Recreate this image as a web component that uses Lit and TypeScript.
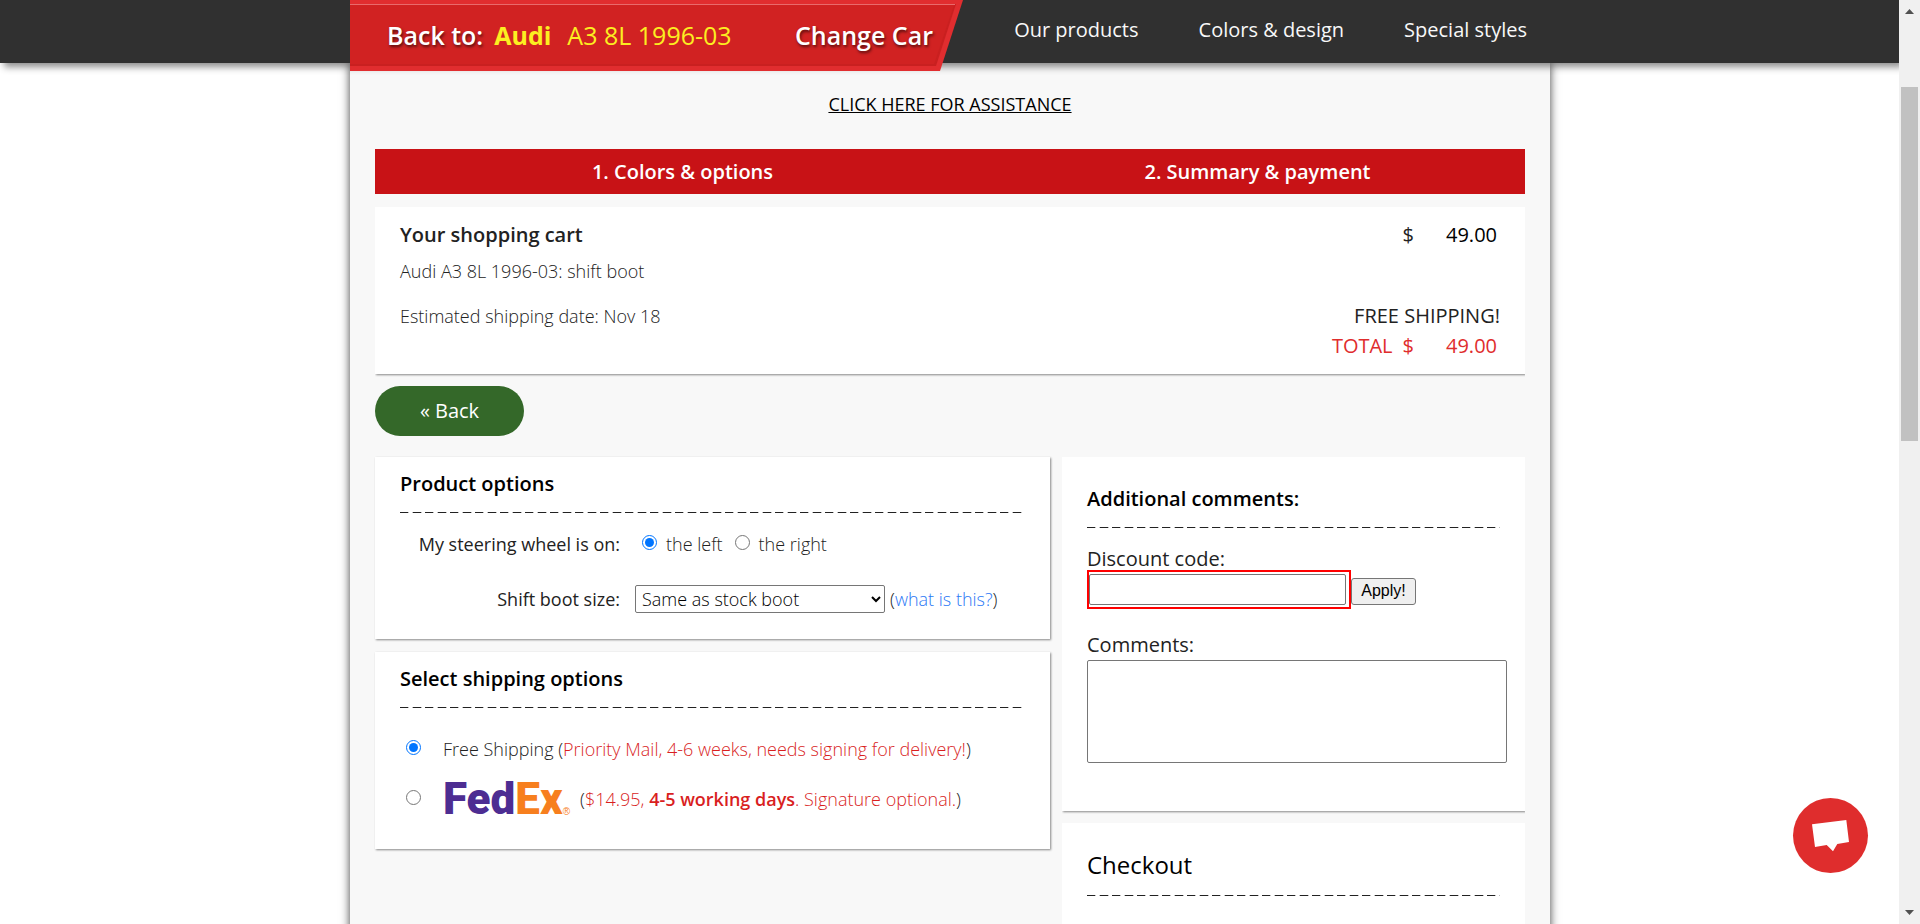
import { LitElement, html, css } from "lit";
import { customElement, state } from "lit/decorators.js";

@customElement("app-root")
export class AppRoot extends LitElement {
  @state() private side = "left";
  @state() private shipping = "free";

  static styles = css`
    :host {
      display: flex;
      height: 100vh;
      overflow: hidden;
      background: #fff;
      color: #222;
      font: 300 18px/26px "Open Sans", sans-serif;
    }
    * {
      box-sizing: border-box;
    }
    h2, p {
      margin: 0;
    }
    .page {
      flex: 1;
      min-width: 0;
      position: relative;
      overflow: hidden;
      display: flex;
      flex-direction: column;
      align-items: center;
    }
    .top {
      width: 100%;
      height: 63px;
      flex: none;
      position: relative;
      z-index: 2;
      display: flex;
      justify-content: center;
      background: #303030;
      box-shadow: 4px 4px 7px rgba(0, 0, 0, 0.45);
    }
    .top-inner {
      width: 100%;
      max-width: 1200px;
      margin-left: 1px;
      display: flex;
      align-items: flex-start;
      justify-content: space-between;
    }
    .tab {
      position: relative;
      width: 613px;
      height: 71px;
      display: flex;
      align-items: center;
      padding: 0 30px 2px 37px;
      font-size: 25px;
      line-height: 36px;
      white-space: nowrap;
    }
    .tab-shape {
      position: absolute;
      inset: 0;
      width: 100%;
      height: 100%;
    }
    .tab a {
      position: relative;
      color: #fff;
      font-weight: 600;
      text-decoration: none;
      text-shadow: 1px 2px 3px rgba(0, 0, 0, 0.6);
    }
    .tab .car {
      display: flex;
      gap: 16px;
      margin: 0 auto 0 11px;
      color: #fcee21;
      font-weight: 400;
      text-shadow: none;
    }
    .tab b {
      font-weight: 700;
    }
    nav {
      display: flex;
      gap: 60px;
      padding: 15px 23px 0 0;
      font-size: 20px;
      line-height: 30px;
      white-space: nowrap;
    }
    nav a {
      color: #f8f8f8;
      font-weight: 400;
      text-decoration: none;
    }
    main {
      width: 100%;
      max-width: 1200px;
      margin-left: 1px;
      flex: 1 0 auto;
      display: flex;
      flex-direction: column;
      padding: 28px 25px 0;
      background: #f8f8f8;
      box-shadow: 0 0 9px rgba(0, 0, 0, 0.75);
    }
    .assist {
      align-self: center;
      color: #000;
      font-weight: 400;
    }
    .steps {
      display: grid;
      grid-template-columns: 1fr 1fr;
      margin: 32px 0 13px;
      padding: 0;
      list-style: none;
      background: #c81216;
      color: #fff;
      font-size: 20px;
      font-weight: 600;
      line-height: 45px;
      text-align: center;
    }
    .steps li {
      padding-left: 40px;
    }
    .card {
      background: #fff;
      box-shadow: 1px 1px 2px #888;
      padding: 12px 25px 25px;
    }
    .flush {
      clip-path: inset(0 0 -4px 0);
    }
    .cart {
      display: grid;
      grid-template-columns: 1fr auto;
      padding: 13px 25px;
      line-height: 30px;
    }
    .price {
      display: flex;
      justify-content: flex-end;
      gap: 10px;
      font-size: 20px;
      font-weight: 400;
    }
    .cart .item {
      grid-column: 1 / 3;
      margin: 6px 0 15px;
    }
    .amount {
      width: 76px;
      padding-right: 3px;
      text-align: right;
    }
    .dark {
      color: #000;
    }
    .total {
      grid-column: 2;
      color: #df2d2d;
    }
    .back {
      align-self: flex-start;
      width: 149px;
      height: 50px;
      margin: 12px 0 21px;
      border: 0;
      border-radius: 25px;
      background: #346829;
      color: #fff;
      font: 400 20px/30px "Open Sans", sans-serif;
    }
    .columns {
      display: grid;
      grid-template-columns: minmax(0, 675fr) minmax(0, 463fr);
      gap: 12px;
      align-items: start;
    }
    .stack {
      display: flex;
      flex-direction: column;
      gap: 13px;
    }
    .side {
      gap: 12px;
    }
    .card h2 {
      font-size: 20px;
      font-weight: 600;
      line-height: 30px;
    }
    .title {
      color: #000;
      padding-bottom: 13px;
    }
    .rule {
      height: 1px;
      background: linear-gradient(90deg, #222 0 8px, #bbb 8px 9px, transparent 9px 12px, #bbb 12px 13px, #222 13px 21px, #bbb 21px 22px, transparent 22px) 0 0 / 25px 1px repeat-x;
    }
    .options {
      display: grid;
      grid-template-columns: 220px 1fr;
      column-gap: 15px;
      row-gap: 27px;
      padding: 17px 0 1px;
      align-items: center;
      line-height: 28px;
    }
    .name {
      text-align: right;
      font-weight: 400;
    }
    .line {
      display: flex;
      align-items: center;
      white-space: nowrap;
    }
    input[type="radio"] {
      width: 15px;
      height: 15px;
      flex: none;
      margin: 0 9px 3px 7px;
    }
    .gap-left {
      padding-left: 5px;
    }
    select {
      width: 250px;
      height: 28px;
      margin-right: 5px;
      padding: 0 2px;
      border: 1px solid #767676;
      border-radius: 2px;
      background-color: #fff;
      color: #000;
      font: 300 18px/26px "Open Sans", sans-serif;
    }
    .line a {
      color: #2b78f5;
      text-decoration: none;
    }
    .red {
      color: #d91f1f;
    }
    .red b {
      font-weight: 600;
    }
    .ship {
      display: flex;
      flex-direction: column;
      gap: 14px;
      padding: 23px 0 7px;
    }
    .ship .line {
      height: 36px;
    }
    .ship input[type="radio"] {
      margin: 0 22px 3px 6px;
    }
    .fedex {
      display: flex;
      align-items: flex-end;
      width: 137px;
      color: #4d2d92;
      font: 900 44px/38px "Roboto", sans-serif;
    }
    .fedex span {
      color: #f77f1e;
    }
    .fedex small {
      font: 400 10px/12px "Liberation Sans", sans-serif;
      color: #f77f1e;
    }
    .notes {
      padding: 27px 25px 48px;
    }
    .field {
      display: block;
      font-size: 20px;
      font-weight: 400;
      line-height: 30px;
    }
    .first {
      height: 42px;
      padding-top: 16px;
    }
    .code {
      display: flex;
      align-items: flex-end;
      margin-bottom: 21px;
    }
    .mark {
      width: 264px;
      height: 39px;
      padding: 2px 3px 2px 0;
      border: 2px solid #f00;
    }
    .mark input, textarea {
      display: block;
      width: 100%;
      height: 31px;
      border: 1px solid #767676;
      border-radius: 2px;
      font: 400 16px/20px "Liberation Sans", sans-serif;
    }
    .apply {
      height: 27px;
      width: 65px;
      margin-bottom: 4px;
      padding: 0 0 2px;
      border: 1px solid #767676;
      border-radius: 3px;
      background: #efefef;
      color: #000;
      font: 400 16px/20px "Liberation Sans", sans-serif;
    }
    .comments {
      padding-right: 18px;
      margin-right: -25px;
    }
    textarea {
      height: 103px;
      resize: none;
    }
    .checkout {
      padding: 25px 25px 60px;
    }
    .checkout h2 {
      font-size: 24px;
      line-height: 34px;
      font-weight: 400;
      padding-bottom: 13px;
    }
    .chat {
      position: absolute;
      right: 31px;
      bottom: 51px;
      z-index: 3;
      width: 75px;
      height: 75px;
      padding: 0;
      border: 0;
      border-radius: 50%;
      background: #df2d2d;
    }
    .chat svg {
      display: block;
    }
    .scroll {
      flex: none;
      width: 21px;
      display: flex;
      flex-direction: column;
      align-items: center;
      padding: 9px 0;
      background: #f0f0f0;
    }
    .track {
      flex: 1;
      width: 17px;
      padding-top: 73px;
    }
    .thumb {
      height: 43%;
      background: #c1c1c1;
    }
    .scroll svg {
      display: block;
      flex: none;
    }
  `;

  private pickSide(e: Event) {
    this.side = (e.target as HTMLInputElement).value;
  }

  private pickShipping(e: Event) {
    this.shipping = (e.target as HTMLInputElement).value;
  }

  render() {
    return html`
      <div class="page">
        <header class="top">
          <div class="top-inner">
            <div class="tab">
              <svg class="tab-shape" viewBox="0 0 613 71" preserveAspectRatio="none" aria-hidden="true">
                <path d="M0 0H613L590 71H0Z" fill="#e12d2f" />
                <path d="M0 4H606L586 66H0Z" fill="#c92020" />
                <path d="M0 5H604L584 64H0Z" fill="#d12222" />
                <path d="M0 4.500H605" stroke="#e96a6b" stroke-width="1" />
              </svg>
              <a href="#">Back to:</a>
              <a class="car" href="#"><b>Audi</b><span>A3 8L 1996-03</span></a>
              <a href="#">Change Car</a>
            </div>
            <nav>
              <a href="#">Our products</a>
              <a href="#">Colors &amp; design</a>
              <a href="#">Special styles</a>
            </nav>
          </div>
        </header>
        <main>
          <a class="assist" href="#">CLICK HERE FOR ASSISTANCE</a>
          <ol class="steps">
            <li>1. Colors &amp; options</li>
            <li>2. Summary &amp; payment</li>
          </ol>
          <section class="card flush cart">
            <h2>Your shopping cart</h2>
            <p class="price"><span>$</span><span class="amount dark">49.00</span></p>
            <p class="item">Audi A3 8L 1996-03: shift boot</p>
            <p>Estimated shipping date: Nov 18</p>
            <p class="price">FREE SHIPPING!</p>
            <p class="price total"><span>TOTAL</span><span>$</span><span class="amount">49.00</span></p>
          </section>
          <button class="back" type="button">« Back</button>
          <div class="columns">
            <div class="stack">
              <section class="card">
                <h2 class="title">Product options</h2>
                <div class="rule"></div>
                <div class="options">
                  <span class="name" id="wheel">My steering wheel is on:</span>
                  <div class="line" role="radiogroup" aria-labelledby="wheel">
                    <input type="radio" id="left" name="side" value="left" .checked=${this.side === "left"} @change=${this.pickSide} />
                    <label for="left">the left</label>
                    <span class="gap-left"></span>
                    <input type="radio" id="right" name="side" value="right" .checked=${this.side === "right"} @change=${this.pickSide} />
                    <label for="right">the right</label>
                  </div>
                  <label class="name" for="size">Shift boot size:</label>
                  <div class="line">
                    <select id="size"><option>Same as stock boot</option></select>
                    <span>(<a href="#">what is this?</a>)</span>
                  </div>
                </div>
              </section>
              <section class="card">
                <h2 class="title">Select shipping options</h2>
                <div class="rule"></div>
                <div class="ship">
                  <div class="line">
                    <input type="radio" id="free" name="ship" value="free" .checked=${this.shipping === "free"} @change=${this.pickShipping} />
                    <label for="free">Free Shipping (<span class="red">Priority Mail, 4-6 weeks, needs signing for delivery!</span>)</label>
                  </div>
                  <div class="line">
                    <input type="radio" id="fedex" name="ship" value="fedex" .checked=${this.shipping === "fedex"} @change=${this.pickShipping} />
                    <label class="line" for="fedex">
                      <span class="fedex">Fed<span>Ex</span><small>®</small></span>
                      <span>(<span class="red">$14.95, <b>4-5 working days</b>. Signature optional.</span>)</span>
                    </label>
                  </div>
                </div>
              </section>
            </div>
            <div class="stack side">
              <section class="card flush notes">
                <h2 class="title">Additional comments:</h2>
                <div class="rule"></div>
                <label class="field first" for="code">Discount code:</label>
                <div class="code">
                  <div class="mark"><input id="code" type="text" /></div>
                  <button class="apply" type="button">Apply!</button>
                </div>
                <label class="field" for="comments">Comments:</label>
                <div class="comments"><textarea id="comments"></textarea></div>
              </section>
              <section class="card flush checkout">
                <h2 class="title">Checkout</h2>
                <div class="rule"></div>
              </section>
            </div>
          </div>
        </main>
        <button class="chat" type="button" aria-label="Chat">
          <svg width="75" height="75" viewBox="0 0 75 75" aria-hidden="true">
            <path d="M19 26.300L53.300 22L56 44L44.300 46L40 53.300L33.700 47L22 49Z" fill="#fff" />
          </svg>
        </button>
      </div>
      <div class="scroll" aria-hidden="true">
        <svg width="9" height="5" viewBox="0 0 9 5"><path d="M0 5L4.500 0L9 5Z" fill="#505050" /></svg>
        <div class="track"><div class="thumb"></div></div>
        <svg width="9" height="5" viewBox="0 0 9 5"><path d="M0 0H9L4.500 5Z" fill="#505050" /></svg>
      </div>
    `;
  }
}
